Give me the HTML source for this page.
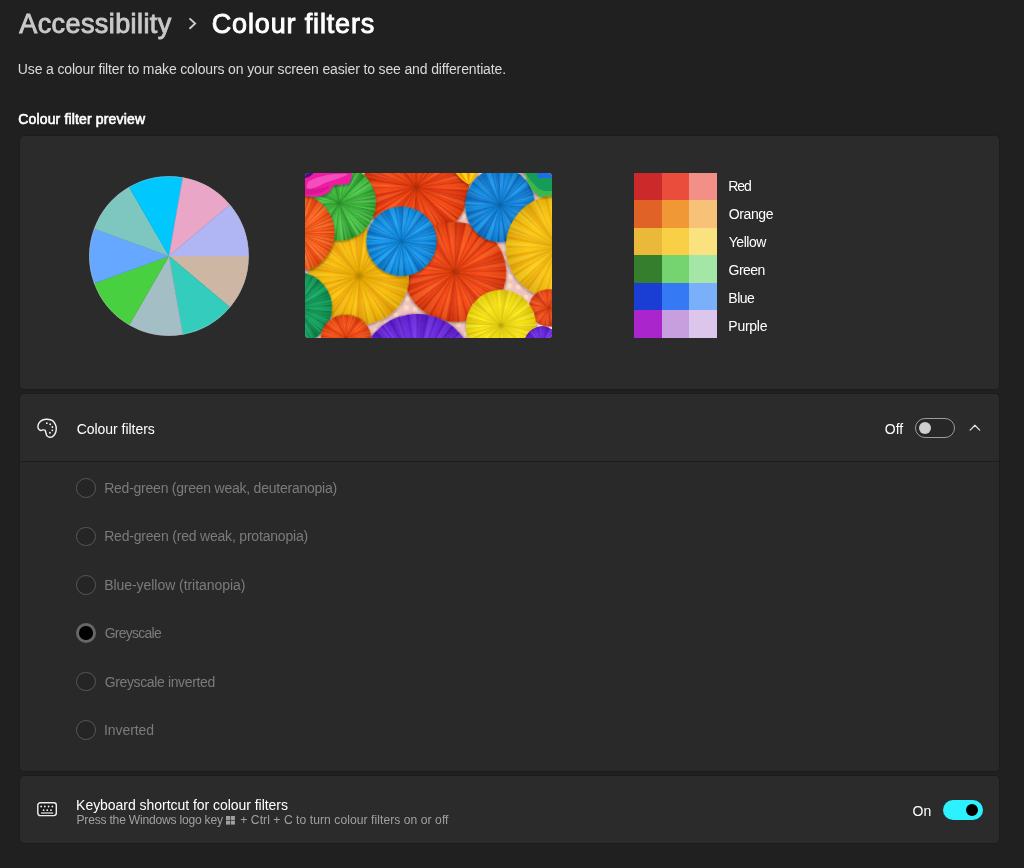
<!DOCTYPE html>
<html lang="en">
<head>
<meta charset="utf-8">
<title>Accessibility › Colour filters</title>
<style>
  html, body { margin:0; padding:0; }
  body {
    width:1024px; height:868px; overflow:hidden; position:relative;
    background:#202020; color:#fff;
    font-family:"Liberation Sans", sans-serif;
  }
  #app { position:absolute; left:0; top:0; width:1024px; height:868px; will-change:transform; }
  .t { position:absolute; white-space:pre; line-height:1; font-weight:400; }
  .card {
    position:absolute; left:18.5px; width:981.5px; box-sizing:border-box;
    background:#2b2b2b; border:solid #1c1c1c; border-width:1.2px 1.6px; border-radius:5px;
  }
  #card-preview { top:135px; height:255px; }
  #card-filters { top:393px; height:379px; }
  #card-filters .sep { position:absolute; left:0; right:0; top:66.8px; height:1.2px; background:#1c1c1c; }
  #card-filters .opts { position:absolute; left:0; right:0; top:68px; bottom:0; background:#292929; border-radius:0 0 4px 4px; }
  #card-shortcut { top:775px; height:69px; }

  /* pie */
  #pie { position:absolute; left:88.8px; top:176.2px; }

  /* colour grid */
  #grid { position:absolute; left:634px; top:172.8px; width:82.8px; height:165px; display:grid;
    grid-template-columns:repeat(3,1fr); grid-template-rows:repeat(6,1fr); }

  /* photo */
  #photo { position:absolute; left:305px; top:173px; width:247px; height:165px; border-radius:4px; overflow:hidden; background:#f3d3c4; }

  /* radios */
  .radio { position:absolute; left:76.3px; width:19.8px; height:19.8px; box-sizing:border-box;
    border:1px solid #575757; border-radius:50%; background:#252525; }
  .radio.sel { border:none; background:#676767; }
  .radio.sel::after { content:""; position:absolute; left:3.2px; top:3.2px; width:13.4px; height:13.4px; border-radius:50%; background:#000; }

  /* toggles */
  .toggle { position:absolute; width:39.6px; height:19.8px; box-sizing:border-box; border-radius:10px; }
  .toggle.off { left:915.2px; top:418.2px; border:1px solid #9c9c9c; background:#272727; }
  .toggle.off::after { content:""; position:absolute; left:2.8px; top:2.9px; width:12px; height:12px; border-radius:50%; background:#cfcfcf; }
  .toggle.on { left:943.3px; top:799.8px; background:#2cf2ff; }
  .toggle.on::after { content:""; position:absolute; left:23.2px; top:3.9px; width:12px; height:12px; border-radius:50%; background:#000; }

  svg.ico { position:absolute; overflow:visible; }
</style>
</head>
<body>
<div id="app">

<!-- breadcrumb / header -->
<span class="t" style="left:19.21px;top:11.34px;font-size:27.0px;letter-spacing:0.421px;color:#c9c9c9;-webkit-text-stroke:0.9px #c9c9c9;">Accessibility</span>
<svg class="ico" style="left:188px;top:17px" width="10" height="13" viewBox="0 0 10 13"><path d="M1.5 1.35 L7.15 6.55 L1.5 11.75" fill="none" stroke="#cdcdcd" stroke-width="1.85" stroke-linecap="butt" stroke-linejoin="miter"/></svg>
<span class="t" style="left:211.78px;top:11.34px;font-size:27.0px;letter-spacing:0.847px;color:#ffffff;-webkit-text-stroke:0.9px #ffffff;">Colour filters</span>
<span class="t" style="left:17.82px;top:61.85px;font-size:14.0px;letter-spacing:-0.145px;color:#dadada;">Use a colour filter to make colours on your screen easier to see and differentiate.</span>
<span class="t" style="left:18.26px;top:112.35px;font-size:14.0px;letter-spacing:0.152px;color:#ffffff;-webkit-text-stroke:0.6px #ffffff;">Colour filter preview</span>

<!-- preview card -->
<div class="card" id="card-preview"></div>
<svg id="pie" width="160" height="160" viewBox="0 0 160 160"><path d="M80 80 L159.60 80.00 A79.6 79.6 0 0 1 140.98 131.17 Z" fill="#ceb6a5" stroke="#ceb6a5" stroke-width=".4"/><path d="M80 80 L140.98 131.17 A79.6 79.6 0 0 1 93.82 158.39 Z" fill="#34cdbd" stroke="#34cdbd" stroke-width=".4"/><path d="M80 80 L93.82 158.39 A79.6 79.6 0 0 1 40.20 148.94 Z" fill="#a3bec5" stroke="#a3bec5" stroke-width=".4"/><path d="M80 80 L40.20 148.94 A79.6 79.6 0 0 1 5.20 107.22 Z" fill="#48d040" stroke="#48d040" stroke-width=".4"/><path d="M80 80 L5.20 107.22 A79.6 79.6 0 0 1 5.20 52.78 Z" fill="#66a8ff" stroke="#66a8ff" stroke-width=".4"/><path d="M80 80 L5.20 52.78 A79.6 79.6 0 0 1 40.20 11.06 Z" fill="#7ec7c0" stroke="#7ec7c0" stroke-width=".4"/><path d="M80 80 L40.20 11.06 A79.6 79.6 0 0 1 93.82 1.61 Z" fill="#00c8ff" stroke="#00c8ff" stroke-width=".4"/><path d="M80 80 L93.82 1.61 A79.6 79.6 0 0 1 140.98 28.83 Z" fill="#e9a6c6" stroke="#e9a6c6" stroke-width=".4"/><path d="M80 80 L140.98 28.83 A79.6 79.6 0 0 1 159.60 80.00 Z" fill="#b0b6f4" stroke="#b0b6f4" stroke-width=".4"/><circle cx="80" cy="80" r="79.39999999999999" fill="none" stroke="#b9b9b9" stroke-opacity=".55" stroke-width=".8"/></svg>
<div id="photo"><svg width="247" height="165" viewBox="0 0 247 165"><defs><filter id="ds" x="-20%" y="-20%" width="140%" height="140%"><feGaussianBlur in="SourceAlpha" stdDeviation=".035"/><feOffset dx="0" dy=".02"/><feComponentTransfer><feFuncA type="linear" slope=".55"/></feComponentTransfer><feMerge><feMergeNode/><feMergeNode in="SourceGraphic"/></feMerge></filter><filter id="ds2" x="-20%" y="-20%" width="140%" height="140%"><feGaussianBlur in="SourceAlpha" stdDeviation="1.4"/><feOffset dx="0" dy=".8"/><feComponentTransfer><feFuncA type="linear" slope=".5"/></feComponentTransfer><feMerge><feMergeNode/><feMergeNode in="SourceGraphic"/></feMerge></filter><filter id="soft"><feGaussianBlur stdDeviation=".45"/></filter><radialGradient id="rg"><stop offset="0" stop-color="#000" stop-opacity=".28"/><stop offset=".12" stop-color="#000" stop-opacity=".08"/><stop offset=".55" stop-color="#fff" stop-opacity=".05"/><stop offset="1" stop-color="#000" stop-opacity=".10"/></radialGradient><pattern id="tile" width="9" height="9" patternUnits="userSpaceOnUse" patternTransform="rotate(8)"><rect width="9" height="9" fill="#f1c4b8"/><rect width="4.5" height="4.5" fill="#f8dcc6"/><rect x="4.5" y="4.5" width="4.5" height="4.5" fill="#eec0cc"/></pattern></defs><g filter="url(#soft)"><rect x="-2" y="-2" width="251" height="169" fill="url(#tile)"/><g transform="translate(111 14.2) rotate(4) scale(53 52)" filter="url(#ds)"><circle r="1" fill="#f4400c"/><circle r=".5" fill="none" stroke="#c92003" stroke-width="1" pathLength="360" stroke-dasharray="18.40 21.60" stroke-dashoffset="-3.0" opacity="0.5"/><circle r=".5" fill="none" stroke="#ff6424" stroke-width="1" pathLength="360" stroke-dasharray="9.00 13.50" stroke-dashoffset="-11.0" opacity="0.5"/><circle r=".5" fill="none" stroke="#c92003" stroke-width="1" pathLength="360" stroke-dasharray="2.16 9.84" stroke-dashoffset="0.0" opacity="0.72"/><circle r=".5" fill="none" stroke="#ff6424" stroke-width="1" pathLength="360" stroke-dasharray="1.68 10.32" stroke-dashoffset="-4.2" opacity="0.35"/><circle r="1" fill="url(#rg)"/></g><g filter="url(#ds2)"><path d="M148.6 -2 L174 -2 L171 3 C169 7 166 10.5 163.4 11.2 C160 10 156 6 148.6 -2 Z" fill="#f7b800"/><path d="M156 -2 L161 -2 L163 10 Z M166 -2 L170 -2 L164.5 10 Z" fill="#ffd92e" opacity=".8"/><path d="M152 -2 L155 -2 L162.5 10.5 Z M162 -2 L164.5 -2 L163.6 10.5 Z" fill="#de9400" opacity=".7"/></g><g transform="translate(149.8 98.9) rotate(9) scale(51.4 49.8)" filter="url(#ds)"><circle r="1" fill="#f5440e"/><circle r=".5" fill="none" stroke="#cc2304" stroke-width="1" pathLength="360" stroke-dasharray="18.40 21.60" stroke-dashoffset="-3.0" opacity="0.5"/><circle r=".5" fill="none" stroke="#ff6626" stroke-width="1" pathLength="360" stroke-dasharray="9.00 13.50" stroke-dashoffset="-11.0" opacity="0.5"/><circle r=".5" fill="none" stroke="#cc2304" stroke-width="1" pathLength="360" stroke-dasharray="2.16 9.84" stroke-dashoffset="0.0" opacity="0.72"/><circle r=".5" fill="none" stroke="#ff6626" stroke-width="1" pathLength="360" stroke-dasharray="1.68 10.32" stroke-dashoffset="-4.2" opacity="0.35"/><circle r="1" fill="url(#rg)"/></g><g transform="translate(54 103) rotate(3) scale(50 48.5)" filter="url(#ds)"><circle r="1" fill="#f9bb02"/><circle r=".5" fill="none" stroke="#e59400" stroke-width="1" pathLength="360" stroke-dasharray="18.40 21.60" stroke-dashoffset="-3.0" opacity="0.5"/><circle r=".5" fill="none" stroke="#ffd21e" stroke-width="1" pathLength="360" stroke-dasharray="9.00 13.50" stroke-dashoffset="-11.0" opacity="0.5"/><circle r=".5" fill="none" stroke="#e59400" stroke-width="1" pathLength="360" stroke-dasharray="2.16 9.84" stroke-dashoffset="0.0" opacity="0.72"/><circle r=".5" fill="none" stroke="#ffd21e" stroke-width="1" pathLength="360" stroke-dasharray="1.68 10.32" stroke-dashoffset="-4.2" opacity="0.35"/><circle r="1" fill="url(#rg)"/></g><g transform="translate(34.3 30) rotate(12) scale(36.4 37.6)" filter="url(#ds)"><circle r="1" fill="#3fc03c"/><circle r=".5" fill="none" stroke="#1a8620" stroke-width="1" pathLength="360" stroke-dasharray="23.66 27.77" stroke-dashoffset="-3.0" opacity="0.5"/><circle r=".5" fill="none" stroke="#68da62" stroke-width="1" pathLength="360" stroke-dasharray="12.00 18.00" stroke-dashoffset="-11.0" opacity="0.5"/><circle r=".5" fill="none" stroke="#1a8620" stroke-width="1" pathLength="360" stroke-dasharray="2.70 12.30" stroke-dashoffset="0.0" opacity="0.72"/><circle r=".5" fill="none" stroke="#68da62" stroke-width="1" pathLength="360" stroke-dasharray="2.10 12.90" stroke-dashoffset="-5.2" opacity="0.35"/><circle r="1" fill="url(#rg)"/></g><g transform="translate(-6 60) rotate(0) scale(35.5 38)" filter="url(#ds)"><circle r="1" fill="#fb5c16"/><circle r=".5" fill="none" stroke="#e03806" stroke-width="1" pathLength="360" stroke-dasharray="23.66 27.77" stroke-dashoffset="-3.0" opacity="0.5"/><circle r=".5" fill="none" stroke="#ff8234" stroke-width="1" pathLength="360" stroke-dasharray="12.00 18.00" stroke-dashoffset="-11.0" opacity="0.5"/><circle r=".5" fill="none" stroke="#e03806" stroke-width="1" pathLength="360" stroke-dasharray="2.70 12.30" stroke-dashoffset="0.0" opacity="0.72"/><circle r=".5" fill="none" stroke="#ff8234" stroke-width="1" pathLength="360" stroke-dasharray="2.10 12.90" stroke-dashoffset="-5.2" opacity="0.35"/><circle r="1" fill="url(#rg)"/></g><g transform="translate(-8.9 134.6) rotate(6) scale(35.8 35.8)" filter="url(#ds)"><circle r="1" fill="#0e9f5a"/><circle r=".5" fill="none" stroke="#06733b" stroke-width="1" pathLength="360" stroke-dasharray="18.40 21.60" stroke-dashoffset="-3.0" opacity="0.5"/><circle r=".5" fill="none" stroke="#1cbd76" stroke-width="1" pathLength="360" stroke-dasharray="9.60 14.40" stroke-dashoffset="-11.0" opacity="0.5"/><circle r=".5" fill="none" stroke="#06733b" stroke-width="1" pathLength="360" stroke-dasharray="2.31 10.54" stroke-dashoffset="0.0" opacity="0.72"/><circle r=".5" fill="none" stroke="#1cbd76" stroke-width="1" pathLength="360" stroke-dasharray="1.80 11.06" stroke-dashoffset="-4.5" opacity="0.35"/><circle r="1" fill="url(#rg)"/></g><g transform="translate(41 165) rotate(5) scale(25 23)" filter="url(#ds)"><circle r="1" fill="#f9480c"/><circle r=".5" fill="none" stroke="#d02a05" stroke-width="1" pathLength="360" stroke-dasharray="23.66 27.77" stroke-dashoffset="-3.0" opacity="0.5"/><circle r=".5" fill="none" stroke="#ff7430" stroke-width="1" pathLength="360" stroke-dasharray="13.09 19.64" stroke-dashoffset="-11.0" opacity="0.5"/><circle r=".5" fill="none" stroke="#d02a05" stroke-width="1" pathLength="360" stroke-dasharray="2.95 13.42" stroke-dashoffset="0.0" opacity="0.72"/><circle r=".5" fill="none" stroke="#ff7430" stroke-width="1" pathLength="360" stroke-dasharray="2.29 14.07" stroke-dashoffset="-5.7" opacity="0.35"/><circle r="1" fill="url(#rg)"/></g><g transform="translate(112 198) rotate(2) scale(57 57)" filter="url(#ds)"><circle r="1" fill="#6a24e2"/><circle r=".5" fill="none" stroke="#4d12ba" stroke-width="1" pathLength="360" stroke-dasharray="15.05 17.67" stroke-dashoffset="-3.0" opacity="0.5"/><circle r=".5" fill="none" stroke="#8040f4" stroke-width="1" pathLength="360" stroke-dasharray="8.00 12.00" stroke-dashoffset="-11.0" opacity="0.5"/><circle r=".5" fill="none" stroke="#4d12ba" stroke-width="1" pathLength="360" stroke-dasharray="1.91 8.68" stroke-dashoffset="0.0" opacity="0.72"/><circle r=".5" fill="none" stroke="#8040f4" stroke-width="1" pathLength="360" stroke-dasharray="1.48 9.11" stroke-dashoffset="-3.7" opacity="0.35"/><circle r="1" fill="url(#rg)"/></g><g transform="translate(96.5 68.2) rotate(7) scale(35 34.6)" filter="url(#ds)"><circle r="1" fill="#0b90ea"/><circle r=".5" fill="none" stroke="#0562b8" stroke-width="1" pathLength="360" stroke-dasharray="18.40 21.60" stroke-dashoffset="-3.0" opacity="0.5"/><circle r=".5" fill="none" stroke="#30b4fa" stroke-width="1" pathLength="360" stroke-dasharray="10.29 15.43" stroke-dashoffset="-11.0" opacity="0.5"/><circle r=".5" fill="none" stroke="#0562b8" stroke-width="1" pathLength="360" stroke-dasharray="2.49 11.35" stroke-dashoffset="0.0" opacity="0.72"/><circle r=".5" fill="none" stroke="#30b4fa" stroke-width="1" pathLength="360" stroke-dasharray="1.94 11.91" stroke-dashoffset="-4.8" opacity="0.35"/><circle r="1" fill="url(#rg)"/></g><g filter="url(#ds2)"><path d="M-2 -2 H46.5 C47 5 45.5 9.5 43.8 10.5 C39 12.5 33 11 29.2 12.3 C26.5 14 26 16.5 24.8 18.4 C21 21.5 17 22.8 12.7 23.6 C8 24.2 3 23.6 -2 22.6 Z" fill="#ee1aa0"/><path d="M3 9 C12 3 28 0 43 1 C36 6 27 7 19 10.5 C13 13.5 7 16 1 17 Z" fill="#f964ca" opacity=".7"/><path d="M-2 14 C6 17 16 17 24 13 C22 18 14 22 -2 21 Z" fill="#c40c84" opacity=".55"/><path d="M-2 -2 H9.5 C8 2 4 4.5 -2 5.5 Z" fill="#4a0c86"/></g><g transform="translate(195 32) rotate(3) scale(34.7 37)" filter="url(#ds)"><circle r="1" fill="#0b86e2"/><circle r=".5" fill="none" stroke="#055cb0" stroke-width="1" pathLength="360" stroke-dasharray="18.40 21.60" stroke-dashoffset="-3.0" opacity="0.5"/><circle r=".5" fill="none" stroke="#2ea8f6" stroke-width="1" pathLength="360" stroke-dasharray="10.29 15.43" stroke-dashoffset="-11.0" opacity="0.5"/><circle r=".5" fill="none" stroke="#055cb0" stroke-width="1" pathLength="360" stroke-dasharray="2.49 11.35" stroke-dashoffset="0.0" opacity="0.72"/><circle r=".5" fill="none" stroke="#2ea8f6" stroke-width="1" pathLength="360" stroke-dasharray="1.94 11.91" stroke-dashoffset="-4.8" opacity="0.35"/><circle r="1" fill="url(#rg)"/></g><g transform="translate(253 74) rotate(5) scale(52 52)" filter="url(#ds)"><circle r="1" fill="#fbc30a"/><circle r=".5" fill="none" stroke="#e8a000" stroke-width="1" pathLength="360" stroke-dasharray="18.40 21.60" stroke-dashoffset="-3.0" opacity="0.5"/><circle r=".5" fill="none" stroke="#ffd92c" stroke-width="1" pathLength="360" stroke-dasharray="9.00 13.50" stroke-dashoffset="-11.0" opacity="0.5"/><circle r=".5" fill="none" stroke="#e8a000" stroke-width="1" pathLength="360" stroke-dasharray="2.16 9.84" stroke-dashoffset="0.0" opacity="0.72"/><circle r=".5" fill="none" stroke="#ffd92c" stroke-width="1" pathLength="360" stroke-dasharray="1.68 10.32" stroke-dashoffset="-4.2" opacity="0.35"/><circle r="1" fill="url(#rg)"/></g><g filter="url(#ds2)"><path d="M213.3 -2 L220.3 1.5 C222 8 226 16 229.2 19.3 C232 22.5 234 23.7 236.8 23.7 C241 24 245 23 249 22.5 V-2 Z" fill="#3bb848"/><path d="M220 -2 C223 6 228 10 231 13 C234 17 238 18.5 249 18 V-2 Z" fill="#179c58"/><path d="M231.7 -2 H249 V5.3 H233 Z" fill="#1a70e0"/></g><g transform="translate(243.5 135) rotate(10) scale(19.5 18.5)" filter="url(#ds)"><circle r="1" fill="#f2460f"/><circle r=".5" fill="none" stroke="#c0260e" stroke-width="1" pathLength="360" stroke-dasharray="33.12 38.88" stroke-dashoffset="-3.0" opacity="0.5"/><circle r=".5" fill="none" stroke="#ff7030" stroke-width="1" pathLength="360" stroke-dasharray="16.00 24.00" stroke-dashoffset="-11.0" opacity="0.5"/><circle r=".5" fill="none" stroke="#c0260e" stroke-width="1" pathLength="360" stroke-dasharray="3.60 16.40" stroke-dashoffset="0.0" opacity="0.72"/><circle r=".5" fill="none" stroke="#ff7030" stroke-width="1" pathLength="360" stroke-dasharray="2.80 17.20" stroke-dashoffset="-7.0" opacity="0.35"/><circle r="1" fill="url(#rg)"/></g><g transform="translate(196 152.4) rotate(1) scale(35 35.4)" filter="url(#ds)"><circle r="1" fill="#f7e300"/><circle r=".5" fill="none" stroke="#e2c000" stroke-width="1" pathLength="360" stroke-dasharray="15.05 17.67" stroke-dashoffset="-3.0" opacity="0.5"/><circle r=".5" fill="none" stroke="#fff64a" stroke-width="1" pathLength="360" stroke-dasharray="8.00 12.00" stroke-dashoffset="-11.0" opacity="0.5"/><circle r=".5" fill="none" stroke="#e2c000" stroke-width="1" pathLength="360" stroke-dasharray="1.91 8.68" stroke-dashoffset="0.0" opacity="0.72"/><circle r=".5" fill="none" stroke="#fff64a" stroke-width="1" pathLength="360" stroke-dasharray="1.48 9.11" stroke-dashoffset="-3.7" opacity="0.35"/><circle r="1" fill="url(#rg)"/></g><g transform="translate(237 172) rotate(0) scale(18 18.5)" filter="url(#ds)"><circle r="1" fill="#6a24e2"/><circle r=".5" fill="none" stroke="#4d12ba" stroke-width="1" pathLength="360" stroke-dasharray="33.12 38.88" stroke-dashoffset="-3.0" opacity="0.5"/><circle r=".5" fill="none" stroke="#8040f4" stroke-width="1" pathLength="360" stroke-dasharray="16.00 24.00" stroke-dashoffset="-11.0" opacity="0.5"/><circle r=".5" fill="none" stroke="#4d12ba" stroke-width="1" pathLength="360" stroke-dasharray="3.60 16.40" stroke-dashoffset="0.0" opacity="0.72"/><circle r=".5" fill="none" stroke="#8040f4" stroke-width="1" pathLength="360" stroke-dasharray="2.80 17.20" stroke-dashoffset="-7.0" opacity="0.35"/><circle r="1" fill="url(#rg)"/></g></g></svg></div>
<div id="grid">
  <i style="background:#cc2a2a"></i><i style="background:#eb4d3c"></i><i style="background:#f28f86"></i>
  <i style="background:#e06226"></i><i style="background:#f09835"></i><i style="background:#f7c177"></i>
  <i style="background:#ebb93a"></i><i style="background:#f9cf45"></i><i style="background:#fae27f"></i>
  <i style="background:#357e2d"></i><i style="background:#75d370"></i><i style="background:#a3e6a5"></i>
  <i style="background:#1a3ed4"></i><i style="background:#3579f4"></i><i style="background:#7aaff9"></i>
  <i style="background:#ab25cc"></i><i style="background:#c79ede"></i><i style="background:#ddc6ec"></i>
</div>
<span class="t" style="left:728.32px;top:179.25px;font-size:14.0px;letter-spacing:-1.137px;color:#ffffff;">Red</span><span class="t" style="left:728.70px;top:207.05px;font-size:14.0px;letter-spacing:-0.372px;color:#ffffff;">Orange</span><span class="t" style="left:728.74px;top:235.25px;font-size:14.0px;letter-spacing:-0.465px;color:#ffffff;">Yellow</span><span class="t" style="left:728.55px;top:263.25px;font-size:14.0px;letter-spacing:-0.542px;color:#ffffff;">Green</span><span class="t" style="left:728.32px;top:291.25px;font-size:14.0px;letter-spacing:-0.477px;color:#ffffff;">Blue</span><span class="t" style="left:728.32px;top:319.45px;font-size:14.0px;letter-spacing:-0.264px;color:#ffffff;">Purple</span>

<!-- colour filters card -->
<div class="card" id="card-filters"><div class="sep"></div><div class="opts"></div></div>
<svg class="ico" style="left:37px;top:418px" width="20" height="21" viewBox="0 0 20 21"><g transform="translate(.55 .5) scale(.945)"><path d="M10 0.8 C11.77 0.92 14.40 1.33 15.9 2.3 C17.40 3.27 18.35 5.10 19 6.6 C19.65 8.10 19.87 9.73 19.8 11.3 C19.73 12.87 19.25 14.70 18.6 16 C17.95 17.30 16.88 18.47 15.9 19.1 C14.92 19.73 13.68 19.92 12.7 19.8 C11.72 19.68 10.65 19.17 10 18.4 C9.35 17.63 9.13 16.18 8.8 15.2 C8.47 14.22 8.45 13.03 8 12.5 C7.55 11.97 6.87 11.97 6.1 12 C5.33 12.03 4.25 12.87 3.4 12.7 C2.55 12.53 1.50 11.75 1 11 C0.50 10.25 0.27 9.32 0.4 8.2 C0.53 7.08 0.98 5.40 1.8 4.3 C2.62 3.20 3.93 2.18 5.3 1.6 C6.67 1.02 8.23 0.68 10 0.8Z" fill="none" stroke="#f2f2f2" stroke-width="1.5" stroke-linejoin="round"/><g fill="#f2f2f2"><circle cx="9.8" cy="4.9" r=".95"/><circle cx="13.4" cy="6.1" r=".95"/><circle cx="15.7" cy="9" r=".95"/><circle cx="15.7" cy="12.5" r=".95"/><circle cx="13.1" cy="15.1" r=".95"/></g></g></svg>
<span class="t" style="left:76.70px;top:421.85px;font-size:14.0px;letter-spacing:-0.038px;color:#ffffff;">Colour filters</span>
<span class="t" style="left:884.85px;top:422.45px;font-size:14.0px;letter-spacing:0.002px;color:#ffffff;">Off</span>
<div class="toggle off"></div>
<svg class="ico" style="left:969.3px;top:424.45px" width="12" height="8" viewBox="0 0 12 8"><path d="M1.1 6.1 L5.9 1.25 L10.7 6.1" fill="none" stroke="#e0e0e0" stroke-width="1.25" stroke-linecap="round" stroke-linejoin="round"/></svg>

<div class="radio" style="top:478.1px"></div><span class="t" style="left:104.16px;top:480.55px;font-size:14.0px;letter-spacing:-0.235px;color:#7b7b7b;">Red-green (green weak, deuteranopia)</span>
<div class="radio" style="top:526.5px"></div><span class="t" style="left:104.16px;top:528.95px;font-size:14.0px;letter-spacing:-0.197px;color:#7b7b7b;">Red-green (red weak, protanopia)</span>
<div class="radio" style="top:574.9px"></div><span class="t" style="left:104.16px;top:578.35px;font-size:14.0px;letter-spacing:-0.049px;color:#7b7b7b;">Blue-yellow (tritanopia)</span>
<div class="radio sel" style="top:623.2px"></div><span class="t" style="left:104.74px;top:625.85px;font-size:14.0px;letter-spacing:-0.751px;color:#7b7b7b;">Greyscale</span>
<div class="radio" style="top:671.6px"></div><span class="t" style="left:104.74px;top:675.25px;font-size:14.0px;letter-spacing:-0.369px;color:#7b7b7b;">Greyscale inverted</span>
<div class="radio" style="top:720px"></div><span class="t" style="left:103.98px;top:722.65px;font-size:14.0px;letter-spacing:-0.061px;color:#7b7b7b;">Inverted</span>

<!-- keyboard shortcut card -->
<div class="card" id="card-shortcut"></div>
<svg class="ico" style="left:37px;top:801.8px" width="20" height="15" viewBox="0 0 20 15"><rect x=".8" y=".8" width="18.5" height="12.8" rx="2.5" fill="#1b1b1b" stroke="#ececec" stroke-width="1.45"/><g fill="#f2f2f2"><circle cx="4.2" cy="4.5" r=".9"/><circle cx="7.8" cy="4.5" r=".9"/><circle cx="11.6" cy="4.5" r=".9"/><circle cx="15.4" cy="4.5" r=".9"/><circle cx="6.6" cy="8.2" r=".9"/><circle cx="10.3" cy="8.2" r=".9"/><circle cx="14" cy="8.2" r=".9"/><rect x="3.9" y="10.35" width="12.5" height="1.5" rx=".6" fill="#c4c4c4"/></g></svg>
<span class="t" style="left:76.10px;top:797.85px;font-size:14.0px;letter-spacing:-0.038px;color:#ffffff;">Keyboard shortcut for colour filters</span>
<span class="t" style="left:76.52px;top:814.36px;font-size:12.1px;letter-spacing:-0.218px;color:#a0a0a0;">Press the Windows logo key</span><svg class="ico" style="left:226.4px;top:816.2px" width="9" height="9" viewBox="0 0 9 9"><g fill="#a0a0a0"><rect x="0" y="0" width="4.1" height="3.95"/><rect x="4.8" y="0" width="4.1" height="3.95"/><rect x="0" y="4.65" width="4.1" height="3.95"/><rect x="4.8" y="4.65" width="4.1" height="3.95"/></g></svg>
<span class="t" style="left:240.32px;top:814.36px;font-size:12.1px;letter-spacing:0.064px;color:#a0a0a0;">+ Ctrl + C to turn colour filters on or off</span>
<span class="t" style="left:912.50px;top:803.85px;font-size:14.0px;letter-spacing:0.011px;color:#ffffff;">On</span>
<div class="toggle on"></div>

</div>
</body>
</html>
